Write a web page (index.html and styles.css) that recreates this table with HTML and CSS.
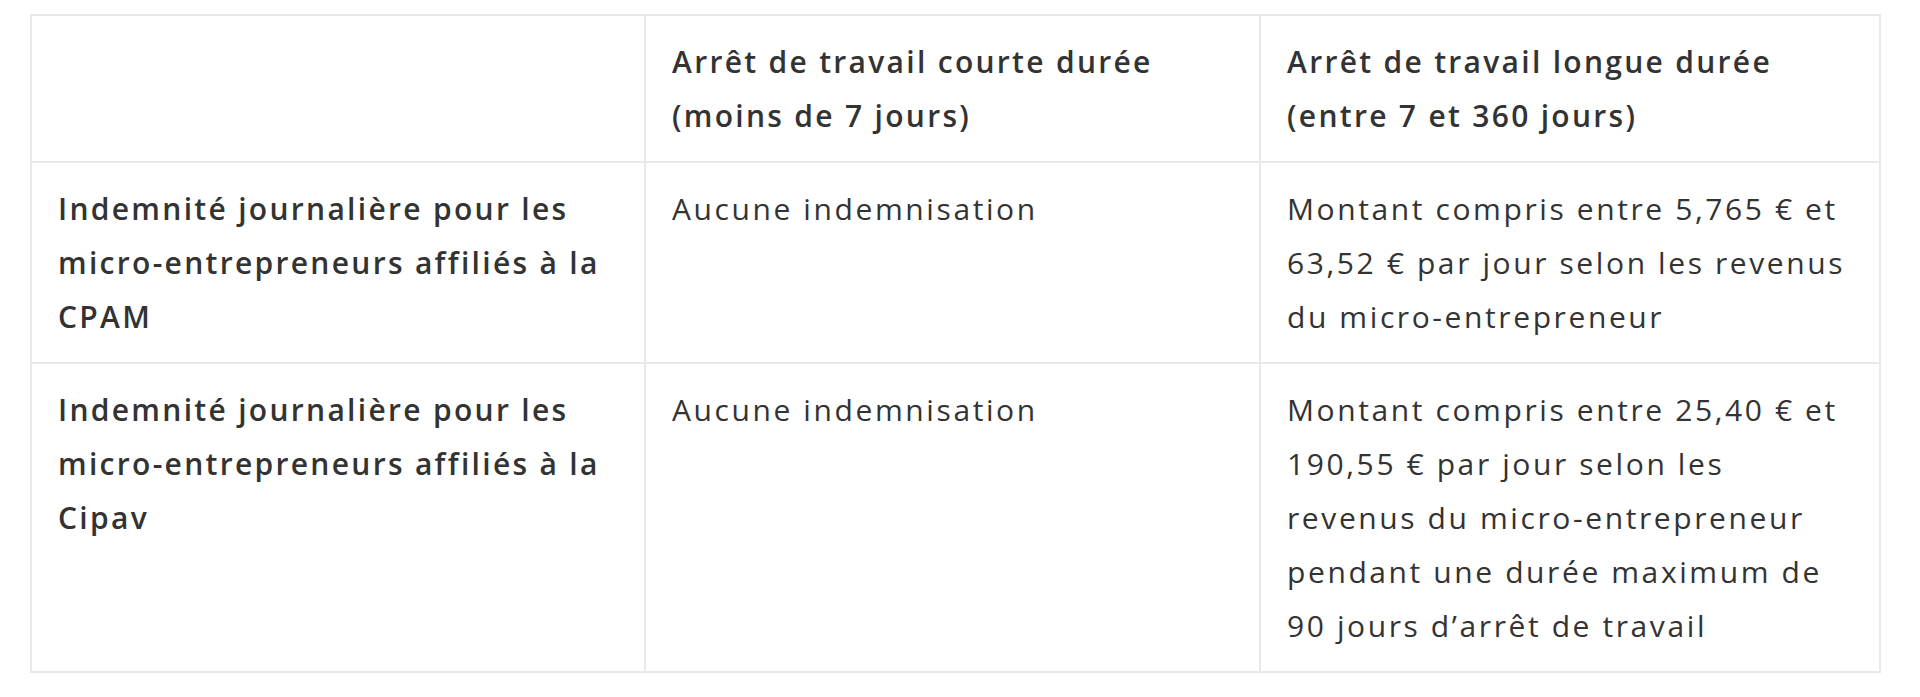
FILE: index.html
```html
<!DOCTYPE html>
<html lang="fr">
<head>
<meta charset="utf-8">
<title>Indemnités journalières micro-entrepreneurs</title>
<link rel="stylesheet" href="styles.css">
</head>
<body>
<div class="wrap">
<table class="grid">
  <colgroup>
    <col class="c1">
    <col class="c2">
    <col class="c3">
  </colgroup>
  <thead>
    <tr>
      <th></th>
      <th>Arrêt de travail courte durée (moins de 7 jours)</th>
      <th>Arrêt de travail longue durée (entre 7 et 360 jours)</th>
    </tr>
  </thead>
  <tbody>
    <tr>
      <th>Indemnité journalière pour les micro-entrepreneurs affiliés à la CPAM</th>
      <td>Aucune indemnisation</td>
      <td>Montant compris entre 5,765 € et 63,52 € par jour selon les revenus du micro-entrepreneur</td>
    </tr>
    <tr>
      <th>Indemnité journalière pour les micro-entrepreneurs affiliés à la Cipav</th>
      <td>Aucune indemnisation</td>
      <td>Montant compris entre 25,40 € et 190,55 € par jour selon les revenus du micro-entrepreneur pendant une durée maximum de 90 jours d’arrêt de travail</td>
    </tr>
  </tbody>
</table>
</div>
</body>
</html>
```
FILE: styles.css
```css
html, body {
  margin: 0;
  padding: 0;
  background: #ffffff;
}
.wrap {
  padding: 14px 0 0 30px;
}
.grid {
  width: 1849px;
  table-layout: fixed;
  border-collapse: collapse;
  font-family: "Open Sans", "Noto Sans", sans-serif;
  font-size: 30px;
  letter-spacing: 2.6px;
  line-height: 54px;
  color: #333333;
}
.c1 { width: 614px; }
.c2 { width: 615px; }
.c3 { width: 620px; }
.grid th,
.grid td {
  border: 2px solid #e9e9e9;
  padding: 19px 26px 18px 26px;
  text-align: left;
  vertical-align: top;
}
.grid th {
  font-weight: 600;
  letter-spacing: 2.3px;
}
.grid td {
  font-weight: 400;
}
```
